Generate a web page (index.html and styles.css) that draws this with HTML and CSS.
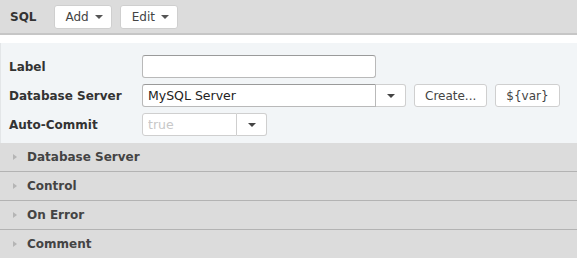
FILE: index.html
```html
<!DOCTYPE html>
<html>
<head>
<meta charset="utf-8">
<link rel="stylesheet" href="styles.css">
</head>
<body>
<div class="toolbar">
  <span class="title">SQL</span>
  <button class="tbtn">Add <span class="caret"></span></button>
  <button class="tbtn">Edit <span class="caret"></span></button>
</div>
<div class="gap"></div>
<div class="form">
  <div class="row">
    <label class="lbl">Label</label>
    <input class="inp wide" type="text" value="">
  </div>
  <div class="row">
    <label class="lbl">Database Server</label>
    <div class="combo">
      <input class="inp wide" type="text" value="MySQL Server">
      <span class="dd"><span class="caret dark"></span></span>
    </div>
    <button class="btn">Create...</button>
    <button class="btn">${var}</button>
  </div>
  <div class="row">
    <label class="lbl">Auto-Commit</label>
    <div class="combo">
      <input class="inp small" type="text" placeholder="true">
      <span class="dd"><span class="caret dark"></span></span>
    </div>
  </div>
</div>
<div class="sections">
  <div class="sec"><span class="tri"></span>Database Server</div>
  <div class="sec"><span class="tri"></span>Control</div>
  <div class="sec"><span class="tri"></span>On Error</div>
  <div class="sec"><span class="tri"></span>Comment</div>
</div>
</body>
</html>
```
FILE: styles.css
```css
html, body {
  margin: 0;
  padding: 0;
  background: #ffffff;
  font-family: "DejaVu Sans", Verdana, sans-serif;
  font-size: 12px;
  color: #333;
}
.toolbar {
  height: 35px;
  background: #dcdcdc;
  border-bottom: 2px solid #c6c6c6;
  display: flex;
  align-items: center;
  padding-left: 10px;
  box-sizing: border-box;
}
.title {
  font-weight: bold;
  font-size: 12px;
  color: #333;
  margin-right: 17px;
}
.tbtn {
  font-family: inherit;
  font-size: 12px;
  color: #444;
  background: #fff;
  border: 1px solid #cfcfcf;
  border-radius: 3px;
  height: 24px;
  padding: 0 8px 0 11px;
  margin-right: 8px;
  display: flex;
  align-items: center;
  gap: 6px;
}
.caret {
  display: inline-block;
  width: 0;
  height: 0;
  border-left: 4px solid transparent;
  border-right: 4px solid transparent;
  border-top: 4px solid #555;
}
.caret.dark { border-top-color: #444; }
.gap {
  height: 8px;
  background: #fff;
}
.form {
  background: #f2f5f7;
  border-left: 1px solid #e3e6e8;
  padding: 12px 0 7px 8px;
  display: flex;
  flex-direction: column;
  gap: 6px;
}
.row {
  display: flex;
  align-items: center;
  height: 23px;
}
.lbl {
  width: 133px;
  font-weight: bold;
  font-size: 12px;
  color: #333;
}
.inp {
  font-family: inherit;
  font-size: 12.5px;
  height: 23px;
  box-sizing: border-box;
  border: 1px solid #b9b9b9;
  border-top-color: #9a9a9a;
  border-radius: 3px;
  padding: 0 5px;
  color: #222;
  background: #fff;
  outline: none;
}
.inp.wide { width: 234px; }
.inp.small { width: 95px; border-color: #cfcfcf; }
.inp::placeholder { color: #c8c8c8; }
.combo { display: flex; }
.combo .inp { border-radius: 3px 0 0 3px; }
.dd {
  width: 30px;
  height: 23px;
  box-sizing: border-box;
  background: #fff;
  border: 1px solid #cfcfcf;
  border-left: none;
  border-radius: 0 3px 3px 0;
  display: flex;
  align-items: center;
  justify-content: center;
}
.btn {
  font-family: inherit;
  font-size: 12px;
  color: #444;
  background: #fff;
  border: 1px solid #cfcfcf;
  border-radius: 3px;
  height: 23px;
  padding: 0 10px;
  margin-left: 8px;
}
.sections { background: #dcdcdc; }
.sec {
  height: 28px;
  border-bottom: 1px solid #b3b3b3;
  box-sizing: content-box;
  display: flex;
  align-items: center;
  font-weight: bold;
  font-size: 12px;
  color: #444;
  padding-left: 13px;
}
.tri {
  width: 0;
  height: 0;
  border-top: 3px solid transparent;
  border-bottom: 3px solid transparent;
  border-left: 4px solid #b5b5b5;
  margin-right: 10px;
}
```
